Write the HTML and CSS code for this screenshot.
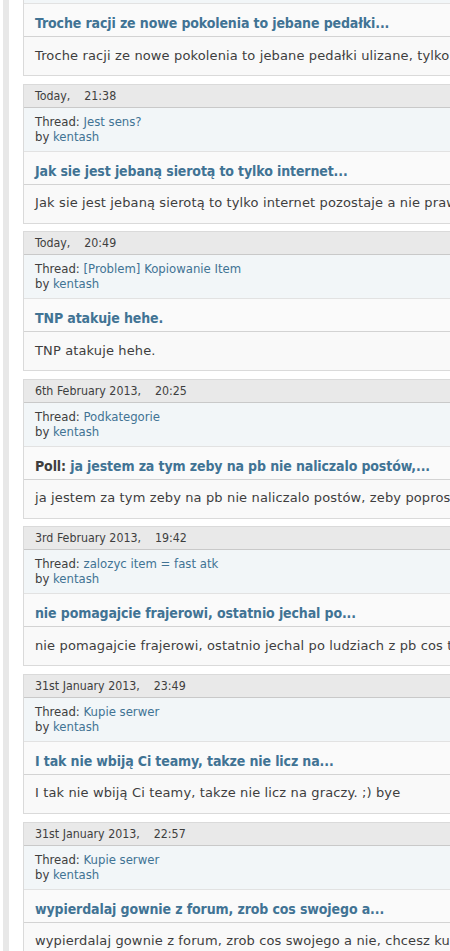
FILE: index.html
```html
<!DOCTYPE html>
<html lang="pl">
<head>
<meta charset="utf-8">
<title>Search Results</title>
<link rel="stylesheet" href="styles.css">
</head>
<body>
<div class="page">
  <div class="rail"></div>
  <main class="results">
    <ol class="posts">
      <li class="post">
        <div class="post-head"><span class="date">Today,<span class="time">21:52</span></span></div>
        <div class="post-thread">Thread: <a href="#">Nowe pokolenie</a><br>by <a href="#">kentash</a></div>
        <h3 class="post-title"><a href="#">Troche racji ze nowe pokolenia to jebane pedałki...</a></h3>
        <div class="post-body">Troche racji ze nowe pokolenia to jebane pedałki ulizane, tylko siedzą przed kompem i nic nie robią</div>
      </li>
      <li class="post">
        <div class="post-head"><span class="date">Today,<span class="time">21:38</span></span></div>
        <div class="post-thread">Thread: <a href="#">Jest sens?</a><br>by <a href="#">kentash</a></div>
        <h3 class="post-title"><a href="#">Jak sie jest jebaną sierotą to tylko internet...</a></h3>
        <div class="post-body">Jak sie jest jebaną sierotą to tylko internet pozostaje a nie prawdziwe życie i znajomi</div>
      </li>
      <li class="post">
        <div class="post-head"><span class="date">Today,<span class="time">20:49</span></span></div>
        <div class="post-thread">Thread: <a href="#">[Problem] Kopiowanie Item</a><br>by <a href="#">kentash</a></div>
        <h3 class="post-title"><a href="#">TNP atakuje hehe.</a></h3>
        <div class="post-body">TNP atakuje hehe.</div>
      </li>
      <li class="post">
        <div class="post-head"><span class="date">6th February 2013,<span class="time">20:25</span></span></div>
        <div class="post-thread">Thread: <a href="#">Podkategorie</a><br>by <a href="#">kentash</a></div>
        <h3 class="post-title"><span class="prefix">Poll:</span> <a href="#">ja jestem za tym zeby na pb nie naliczalo postów,...</a></h3>
        <div class="post-body">ja jestem za tym zeby na pb nie naliczalo postów, zeby poprostu nie nabijali sobie</div>
      </li>
      <li class="post">
        <div class="post-head"><span class="date">3rd February 2013,<span class="time">19:42</span></span></div>
        <div class="post-thread">Thread: <a href="#">zalozyc item = fast atk</a><br>by <a href="#">kentash</a></div>
        <h3 class="post-title"><a href="#">nie pomagajcie frajerowi, ostatnio jechal po...</a></h3>
        <div class="post-body">nie pomagajcie frajerowi, ostatnio jechal po ludziach z pb cos tam pisal</div>
      </li>
      <li class="post">
        <div class="post-head"><span class="date">31st January 2013,<span class="time">23:49</span></span></div>
        <div class="post-thread">Thread: <a href="#">Kupie serwer</a><br>by <a href="#">kentash</a></div>
        <h3 class="post-title"><a href="#">I tak nie wbiją Ci teamy, takze nie licz na...</a></h3>
        <div class="post-body">I tak nie wbiją Ci teamy, takze nie licz na graczy. ;) bye</div>
      </li>
      <li class="post">
        <div class="post-head"><span class="date">31st January 2013,<span class="time">22:57</span></span></div>
        <div class="post-thread">Thread: <a href="#">Kupie serwer</a><br>by <a href="#">kentash</a></div>
        <h3 class="post-title"><a href="#">wypierdalaj gownie z forum, zrob cos swojego a...</a></h3>
        <div class="post-body">wypierdalaj gownie z forum, zrob cos swojego a nie, chcesz kupic gotowca</div>
      </li>
    </ol>
  </main>
</div>
</body>
</html>
```

FILE: styles.css
```css
html, body {
  margin: 0;
  padding: 0;
  background: #ffffff;
  overflow: hidden;
}

body {
  font-family: "DejaVu Sans", Verdana, sans-serif;
  color: #3e3e3e;
}

a {
  color: #417394;
  text-decoration: none;
}

.page {
  display: flex;
  align-items: stretch;
  min-height: 951px;
}

/* thin grey edge of the outer wrapper */
.rail {
  flex: 0 0 6px;
  margin-left: 3px;
  background: #e8e8e8;
}

.results {
  flex: 0 0 auto;
  padding-left: 14px;
}

.posts {
  list-style: none;
  margin: -64px 0 0 0;
  padding: 0;
  width: 720px;
}

.post {
  border: 1px solid #dadada;
  background: #f9f9f9;
  margin-bottom: 7.6px;
}

.post-head {
  height: 22px;
  line-height: 22px;
  padding-left: 11px;
  background: #e9e9e9;
  border-bottom: 1px solid #c9c9c9;
  font-family: "DejaVu Sans Condensed", Tahoma, sans-serif;
  font-size: 12.3px;
  white-space: nowrap;
}

.time {
  margin-left: 14px;
}

.post-thread {
  height: 30px;
  padding: 6px 0 7px 11px;
  line-height: 15px;
  background: #f2f6f8;
  border-bottom: 1px solid #e2e2e2;
  font-family: "DejaVu Sans Condensed", Tahoma, sans-serif;
  font-size: 13px;
  white-space: nowrap;
}

.post-title {
  margin: 0;
  height: 18px;
  padding: 10px 0 4px 11px;
  line-height: 18px;
  background: #fafafa;
  border-bottom: 1px solid #d3d3d3;
  font-family: "DejaVu Sans Condensed", Tahoma, sans-serif;
  font-size: 14px;
  font-weight: bold;
  letter-spacing: -0.12px;
  white-space: nowrap;
}

.prefix {
  color: #3e3e3e;
}

.post-body {
  height: 18px;
  padding: 9.5px 0 10.5px 11px;
  line-height: 18px;
  font-size: 13px;
  letter-spacing: 0.13px;
  white-space: nowrap;
}
```
